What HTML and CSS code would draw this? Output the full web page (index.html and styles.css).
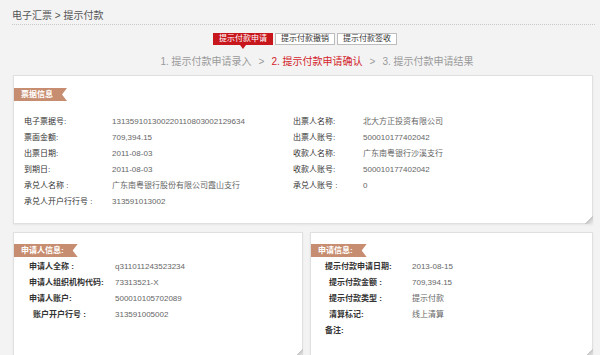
FILE: index.html
```html
<!DOCTYPE html>
<html lang="zh-CN">
<head>
    <meta charset="UTF-8">
    <meta name="viewport" content="width=device-width, initial-scale=1.0">
    <title>提示付款</title>
    <link rel="stylesheet" href="styles.css">
</head>

<body>
    <div class="page">
        <div class="crumb">电子汇票 &gt; 提示付款</div>

        <div class="tabs">
            <span class="tab tab-on">提示付款申请</span>
            <span class="tab">提示付款撤销</span>
            <span class="tab">提示付款签收</span>
        </div>

        <div class="steps">
            <span>1. 提示付款申请录入</span>
            <span class="sep">&gt;</span>
            <span class="step-on">2. 提示付款申请确认</span>
            <span class="sep">&gt;</span>
            <span>3. 提示付款申请结果</span>
        </div>

        <!-- 票据信息 -->
        <div class="panel panel-bill">
            <div class="badge">票据信息</div>
            <div class="info info-bill">
                <span class="lbl">电子票据号:</span><span class="val">131359101300220110803002129634</span>
                <span class="lbl">出票人名称:</span><span class="val">北大方正投资有限公司</span>

                <span class="lbl">票面金额:</span><span class="val">709,394.15</span>
                <span class="lbl">出票人账号:</span><span class="val">500010177402042</span>

                <span class="lbl">出票日期:</span><span class="val">2011-08-03</span>
                <span class="lbl">收款人名称:</span><span class="val">广东南粤银行沙溪支行</span>

                <span class="lbl">到期日:</span><span class="val">2011-08-03</span>
                <span class="lbl">收款人账号:</span><span class="val">500010177402042</span>

                <span class="lbl">承兑人名称 :</span><span class="val">广东南粤银行股份有限公司霞山支行</span>
                <span class="lbl">承兑人账号 :</span><span class="val">0</span>

                <span class="lbl">承兑人开户行行号 :</span><span class="val">313591013002</span>
            </div>
        </div>

        <div class="lower">
            <!-- 申请人信息 -->
            <div class="panel">
                <div class="badge">申请人信息:</div>
                <div class="info info-left">
                    <span class="lbl">申请人全称 :</span><span class="val">q311011243523234</span>
                    <span class="lbl">申请人组织机构代码:</span><span class="val">73313521-X</span>
                    <span class="lbl">申请人账户:</span><span class="val">500010105702089</span>
                    <span class="lbl ind">账户开户行号 :</span><span class="val">313591005002</span>
                </div>
            </div>

            <!-- 申请信息 -->
            <div class="panel">
                <div class="badge">申请信息:</div>
                <div class="info info-right">
                    <span class="lbl">提示付款申请日期:</span><span class="val">2013-08-15</span>
                    <span class="lbl ind">提示付款金额 :</span><span class="val">709,394.15</span>
                    <span class="lbl ind">提示付款类型 :</span><span class="val">提示付款</span>
                    <span class="lbl ind">清算标记:</span><span class="val">线上清算</span>
                    <span class="lbl">备注:</span><span class="val"></span>
                </div>
            </div>
        </div>
    </div>
</body>
</html>
```

FILE: styles.css
```css
body {
    margin: 0;
    background-color: #f3f3f3;
    font-family: "Liberation Sans", "Noto Sans CJK SC", sans-serif;
    color: #333;
}

.page {
    padding: 0 7px 0 13px;
}

.crumb {
    padding: 10px 0 2px;
    margin-left: -1px;
    margin-right: -2px;
    font-size: 10px;
    line-height: 12px;
    color: #555;
    border-bottom: 1px dotted #c8c8c8;
}

.tabs {
    display: flex;
    justify-content: center;
    gap: 2px;
    margin-top: 8px;
    padding-left: 4px;
}

.tab {
    position: relative;
    padding: 0 5px;
    font-size: 8px;
    line-height: 10px;
    color: #333;
    background-color: #fff;
    border: 1px solid #bdbdbd;
}

.tab-on {
    color: #fff;
    background-color: #c8161d;
    border-color: #c8161d;
}

.tab-on::after {
    content: "";
    position: absolute;
    left: 50%;
    bottom: -5px;
    margin-left: -3px;
    border-left: 3px solid transparent;
    border-right: 3px solid transparent;
    border-top: 4px solid #c8161d;
}

.steps {
    display: flex;
    justify-content: center;
    gap: 7px;
    margin-top: 10px;
    padding-left: 28px;
    font-size: 10px;
    line-height: 14px;
    color: #9a9a9a;
}

.step-on {
    color: #d2232a;
}

.panel {
    position: relative;
    background-color: #fff;
    border: 1px solid #e0e0e0;
    box-shadow: 0 1px 2px rgba(0, 0, 0, 0.06);
    padding-top: 6px;
}

.panel::after {
    content: "";
    position: absolute;
    right: -1px;
    bottom: -1px;
    width: 9px;
    height: 9px;
    background: linear-gradient(135deg, transparent 50%, #c2c2c2 50%, #efefef 100%);
}

.panel-bill {
    margin-top: 6px;
    padding-top: 7px;
    padding-bottom: 13px;
}

.badge {
    display: inline-block;
    padding: 0 14px 0 7px;
    font-size: 8px;
    font-weight: bold;
    line-height: 13px;
    color: #fff;
    background-color: #c78d70;
    clip-path: polygon(0 0, 100% 0, calc(100% - 5px) 50%, 100% 100%, 0 100%);
}

.info {
    display: grid;
    font-size: 8px;
    line-height: 16px;
}

.lbl {
    color: #333;
    white-space: nowrap;
}

.val {
    color: #666;
    white-space: nowrap;
}

.info-bill {
    grid-template-columns: 88px 181px 70px 1fr;
    margin-top: 13px;
    padding-left: 10px;
}

.lower {
    display: grid;
    grid-template-columns: 290px 1fr;
    gap: 7px;
    margin-top: 8px;
    height: 125px;
}

.lower .lbl {
    font-weight: bold;
}

.info-left {
    grid-template-columns: 86px 1fr;
    margin-top: 2px;
    padding-left: 15px;
}

.info-right {
    grid-template-columns: 87px 1fr;
    margin-top: 2px;
    padding-left: 14px;
}

.ind {
    padding-left: 4px;
}
```
